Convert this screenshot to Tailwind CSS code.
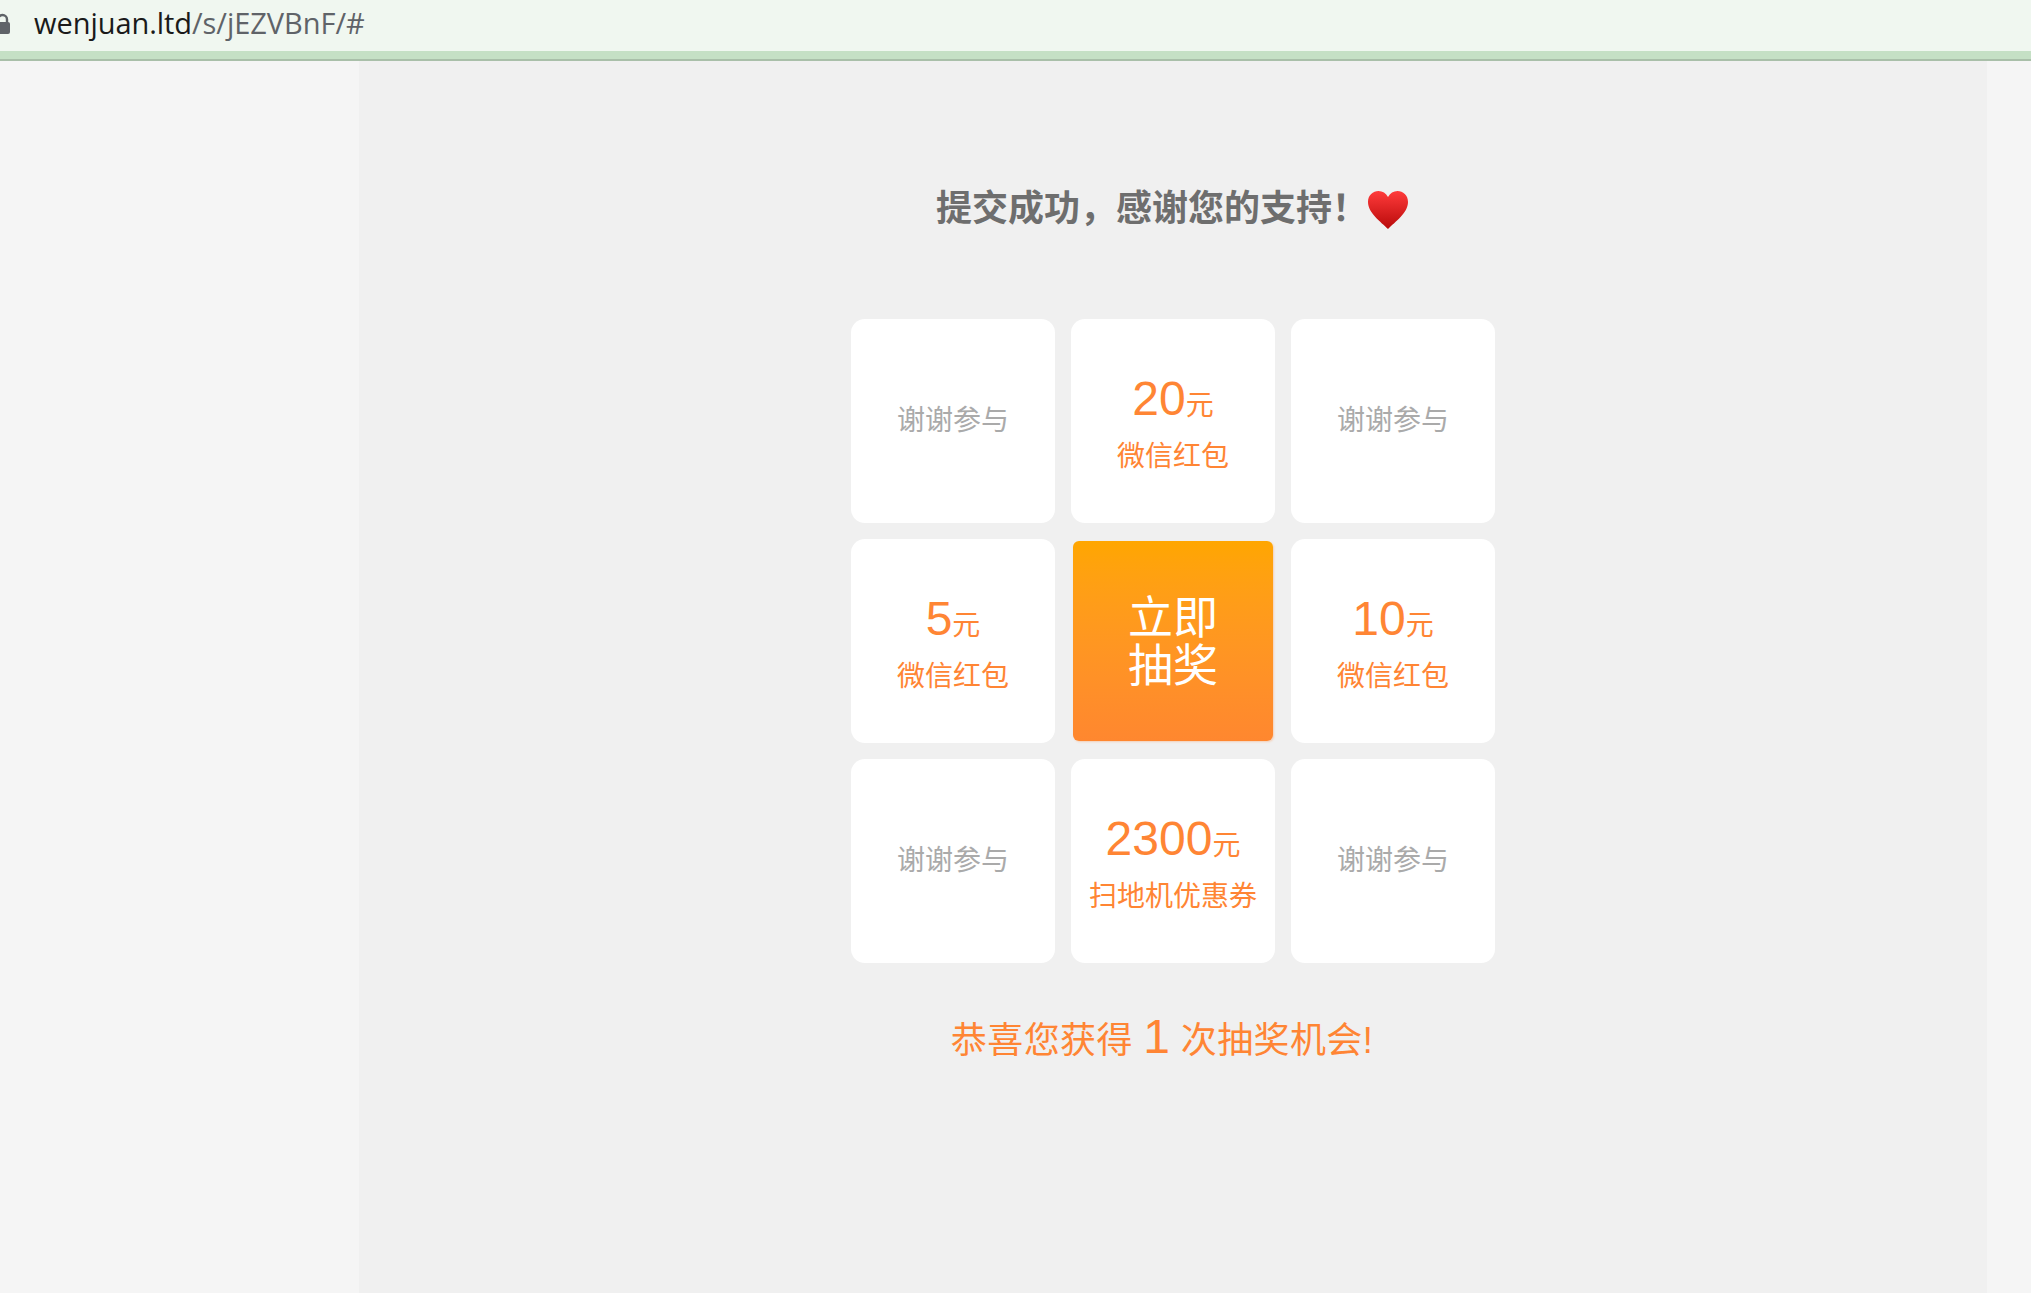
<!DOCTYPE html>
<html lang="zh-CN">
<head>
<meta charset="utf-8">
<title>wenjuan.ltd</title>
<script src="https://cdn.jsdelivr.net/npm/@tailwindcss/browser@4"></script>
</head>
<body class="m-0 w-[2031px] h-[1293px] overflow-hidden bg-[#f5f5f5] font-['Liberation_Sans','Noto_Sans_CJK_SC',sans-serif]">
<header class="h-[51px] bg-[#f0f7f0] flex items-start overflow-hidden">
  <svg class="ml-[-6px] mt-[13px] w-[17px] h-[22px] shrink-0" viewBox="0 0 17 22"><path d="M4 9V6.500a4.500 4.500 0 0 1 9 0V9" fill="none" stroke="#5f6368" stroke-width="2.400"/><rect x="1" y="9" width="15" height="12" rx="2" fill="#5f6368"/></svg>
  <div class="ml-[23px] mt-[0px] font-['Open_Sans',sans-serif] text-[29px] tracking-[-0.05px] leading-[46px] text-[#5f6368] whitespace-nowrap"><span class="text-[#1a1a1a]">wenjuan.ltd</span>/s/jEZVBnF/#</div>
</header>
<div class="h-[8px] bg-[#c5e0c5]"></div>
<div class="h-[2px] bg-[#a9bfa9]"></div>
<main class="ml-[359px] w-[1628px] h-[1232px] bg-[#f0f0f0] flex flex-col items-center">
  <h1 class="mt-[116px] h-[56px] flex items-center font-['Noto_Sans_CJK_SC',sans-serif] font-bold text-[36px] text-[#6e6e6e] whitespace-nowrap">
    提交成功，感谢您的支持！
    <svg class="ml-[-2px] mt-[9px] w-[44px] h-[42px]" viewBox="0 0 44 42">
      <defs><linearGradient id="h" x1="0" y1="0" x2="0" y2="1"><stop offset="0" stop-color="#ff3b3b"/><stop offset="1" stop-color="#b80a0a"/></linearGradient></defs>
      <path d="M22 40C15 33 2 24 2 13 2 6 7 2 12.500 2 16.500 2 20 4 22 8 24 4 27.500 2 31.500 2 37 2 42 6 42 13 42 24 29 33 22 40Z" fill="url(#h)"/>
    </svg>
  </h1>
  <div class="mt-[86px] grid grid-cols-[204px_204px_204px] grid-rows-[204px_204px_204px] gap-4">
    <div class="bg-white rounded-[14px] flex items-center justify-center text-[28px] text-[#aaaaaa]">谢谢参与</div>
    <div class="bg-white rounded-[14px] flex flex-col items-center justify-center pt-[5px] text-[#ff8534]">
      <div class="text-[48px] leading-[56px] whitespace-nowrap">20<span class="text-[28px]">元</span></div>
      <div class="mt-[3px] text-[28px] leading-[40px] whitespace-nowrap">微信红包</div>
    </div>
    <div class="bg-white rounded-[14px] flex items-center justify-center text-[28px] text-[#aaaaaa]">谢谢参与</div>
    <div class="bg-white rounded-[14px] flex flex-col items-center justify-center pt-[5px] text-[#ff8534]">
      <div class="text-[48px] leading-[56px] whitespace-nowrap">5<span class="text-[28px]">元</span></div>
      <div class="mt-[3px] text-[28px] leading-[40px] whitespace-nowrap">微信红包</div>
    </div>
    <div class="p-[2px]">
      <button class="w-full h-full pt-[3px] rounded-[6px] bg-gradient-to-b from-[#ffa600] to-[#ff872f] text-white text-[45px] leading-[48px] flex items-center justify-center shadow-[1px_1px_2px_rgba(255,133,52,0.3)]">立即<br>抽奖</button>
    </div>
    <div class="bg-white rounded-[14px] flex flex-col items-center justify-center pt-[5px] text-[#ff8534]">
      <div class="text-[48px] leading-[56px] whitespace-nowrap">10<span class="text-[28px]">元</span></div>
      <div class="mt-[3px] text-[28px] leading-[40px] whitespace-nowrap">微信红包</div>
    </div>
    <div class="bg-white rounded-[14px] flex items-center justify-center text-[28px] text-[#aaaaaa]">谢谢参与</div>
    <div class="bg-white rounded-[14px] flex flex-col items-center justify-center pt-[5px] text-[#ff8534]">
      <div class="text-[48px] leading-[56px] whitespace-nowrap">2300<span class="text-[28px]">元</span></div>
      <div class="mt-[3px] text-[28px] leading-[40px] whitespace-nowrap">扫地机优惠券</div>
    </div>
    <div class="bg-white rounded-[14px] flex items-center justify-center text-[28px] text-[#aaaaaa]">谢谢参与</div>
  </div>
  <p class="mt-[42px] mr-[22px] text-[36px] tracking-[0.4px] leading-[64px] text-[#ff8534] whitespace-nowrap">恭喜您获得 <span class="text-[48px]">1</span> 次抽奖机会!</p>
</main>
</body>
</html>
